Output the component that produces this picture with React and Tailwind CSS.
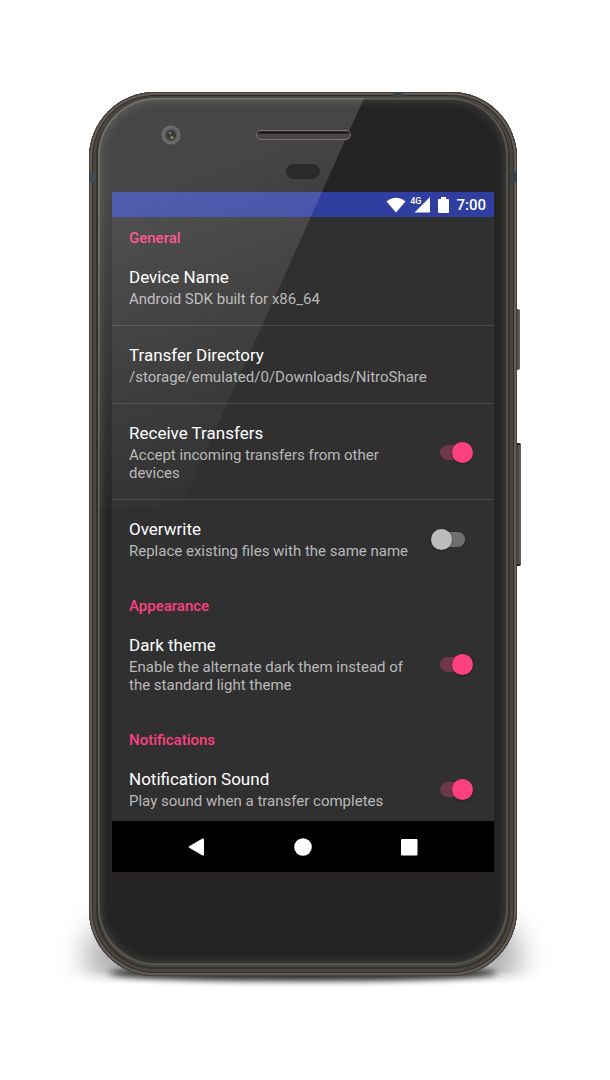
import React from "react";

function Row({ title, summary, control, divider, tight, id }) {
  return (
    <div
      className={`flex items-center pl-[17px] pr-5 pt-[18px] ${tight ? "pb-[11px]" : "pb-[17px]"} ${divider ? "border-b border-[#4b4b4b]" : ""}`}
    >
      <div className="min-w-0 flex-1">
        {control === undefined ? (
          <h3 className="text-[17px] leading-[22px] text-white">{title}</h3>
        ) : (
          <label htmlFor={id} className="block text-[17px] leading-[22px] text-white">{title}</label>
        )}
        <p className="mt-[2px] text-[15px] leading-[18px] text-[#b9b9b9]">{summary}</p>
      </div>
      {control !== undefined && <Toggle id={id} on={control} />}
    </div>
  );
}

function Toggle({ id, on }) {
  return (
    <span className="relative ml-3 h-[22px] w-[44px] shrink-0">
      <input id={id} type="checkbox" role="switch" defaultChecked={on} className="peer absolute inset-0 z-10 m-0 h-full w-full cursor-pointer opacity-0" />
      <span className="absolute left-[10px] top-1 h-[15px] w-[25px] rounded-full bg-[#707070] peer-checked:bg-[#70364a]" />
      <span className="absolute left-px top-px size-[21px] rounded-full bg-[#bdbdbd] shadow-[0_1px_2px_rgba(0,0,0,0.4)] peer-checked:left-[22px] peer-checked:bg-[#fd4080]" />
    </span>
  );
}

function Heading({ first, children }) {
  return (
    <h2 className={`px-[17px] text-[15px] font-medium leading-5 text-[#fd4080] ${first ? "pt-[11px]" : "pt-[19px]"}`}>
      {children}
    </h2>
  );
}

function StatusBar() {
  return (
    <div className="flex h-[25px] items-center justify-end bg-[#303f9f] pr-2 text-white">
      <svg className="mr-1 h-4 w-5" viewBox="0 0 20 16" fill="currentColor" aria-hidden="true">
        <path d="M.5 4.500Q10-3 19.500 4.500L10 15.500Z" />
      </svg>
      <span className="self-start pt-[3px] text-[9px] font-medium leading-3">4G</span>
      <svg className="-ml-[7px] mr-2 h-4 w-4" viewBox="0 0 16 16" fill="currentColor" aria-hidden="true">
        <path d="M16 0V15.500H.5Z" />
      </svg>
      <svg className="mr-[7px] h-4 w-[11px]" viewBox="0 0 11 16" fill="currentColor" aria-hidden="true">
        <path d="M3 0h5v2h2q1 0 1 1v12q0 1-1 1H1q-1 0-1-1V3q0-1 1-1h2Z" />
      </svg>
      <span className="text-[15px] font-medium leading-[18px]">7:00</span>
    </div>
  );
}

function NavBar() {
  return (
    <nav className="flex h-[51px] items-center justify-center gap-[86px] bg-black text-white">
      <button type="button" aria-label="Back" className="size-5">
        <svg viewBox="0 0 20 20" fill="currentColor"><path d="M2.200 9.200 15.500 1.600Q17 1 17 2.500v15q0 1.500-1.500.9L2.200 10.800q-1.200-.8 0-1.600Z" /></svg>
      </button>
      <button type="button" aria-label="Home" className="size-5">
        <svg viewBox="0 0 20 20" fill="currentColor"><circle cx="10" cy="10" r="8.800" /></svg>
      </button>
      <button type="button" aria-label="Recent apps" className="size-5">
        <svg viewBox="0 0 20 20" fill="currentColor"><rect x="2" y="2" width="16.500" height="16.500" rx="1" /></svg>
      </button>
    </nav>
  );
}

function Hardware() {
  return (
    <svg className="relative z-10 h-[94px] w-full" viewBox="0 0 410 94" aria-hidden="true">
      <circle cx="73" cy="37" r="9.500" fill="#6e6e6e" />
      <circle cx="73" cy="37" r="7.500" fill="#606061" />
      <circle cx="73" cy="37" r="5.200" fill="#3c3c3d" />
      <circle cx="72" cy="35" r="1.200" fill="#77778a" />
      <circle cx="74" cy="39.500" r="1.600" fill="#918c4c" />
      <rect x="158.500" y="32.500" width="94" height="9" rx="4.500" fill="#4b4643" stroke="#777575" />
      <path d="M162 33.500h87q2 0 3 2H159q1-2 3-2Z" fill="#151313" />
      <rect x="188" y="66" width="34" height="15" rx="7.500" fill="#2a2a2d" />
    </svg>
  );
}

export default function App() {
  return (
    <main className="flex min-h-screen items-start justify-center overflow-hidden bg-white pb-[104px] pl-1 pr-2 pt-[92px] font-[Roboto,sans-serif]">
      <div className="relative w-full max-w-[428px]">
        <span className="absolute -bottom-2 -left-10 -right-10 h-28 overflow-hidden mask-[linear-gradient(to_bottom,#000_88%,transparent)]">
          <span className="absolute -bottom-2 left-9 right-9 h-18 rounded-[40px] bg-black/30 blur-[14px]" />
        </span>
        <span className="absolute -bottom-[5px] left-5 right-5 h-4 rounded-[50%] bg-black/80 blur-[3px]" />
        <span className="absolute -right-[3px] top-[217px] h-[61px] w-1 rounded-r-xs bg-linear-to-r from-[#3c3937] to-[#6a6663]" />
        <span className="absolute -right-1 top-[351px] h-[123px] w-[5px] rounded-r-xs border-y-2 border-[#222] bg-linear-to-r from-[#34312e] to-[#6a6663]" />

        <div className="relative rounded-[66px] bg-[#4b463d] px-[9px] pb-[11px] pt-[6px] shadow-[inset_0_0_0_1px_#474240,inset_0_0_0_3px_#625c5b,inset_0_0_0_4px_#302c2a,inset_0_0_0_7px_#4a453e,inset_0_0_0_9px_#33302d]">
          <span className="absolute left-0 top-[80px] h-2.5 w-[7px] bg-[#434a4f]" />
          <span className="absolute right-0 top-[80px] h-2.5 w-[7px] bg-[#3a4046]" />
          <span className="absolute right-[114px] top-px h-[4px] w-2.5 bg-[#3a4046]" />
          <div className="relative overflow-hidden rounded-[58px] bg-[#252323] px-[14px] pb-[93px] shadow-[inset_0_0_0_1px_#5c5c59,inset_0_0_0_2px_#4d4d4a,inset_0_0_7px_5px_#3a3a38]">
            <div className="-mx-[14px]"><Hardware /></div>
            <section className="bg-[#303030]">
              <StatusBar />
              <Heading first>General</Heading>
              <Row divider title="Device Name" summary="Android SDK built for x86_64" />
              <Row divider title="Transfer Directory" summary="/storage/emulated/0/Downloads/NitroShare" />
              <Row divider id="receive" title="Receive Transfers" summary="Accept incoming transfers from other devices" control={true} />
              <Row id="overwrite" title="Overwrite" summary="Replace existing files with the same name" control={false} />
              <Heading>Appearance</Heading>
              <Row id="dark" title="Dark theme" summary="Enable the alternate dark them instead of the standard light theme" control={true} />
              <Heading>Notifications</Heading>
              <Row tight id="sound" title="Notification Sound" summary="Play sound when a transfer completes" control={true} />
              <NavBar />
            </section>
            <span className="pointer-events-none absolute left-0 top-0 h-[410px] w-[266px] bg-linear-160 from-white/16 from-20% to-transparent to-90% [clip-path:polygon(0_0,100%_0,31%_100%,0_100%)]" />
          </div>
        </div>
      </div>
    </main>
  );
}
